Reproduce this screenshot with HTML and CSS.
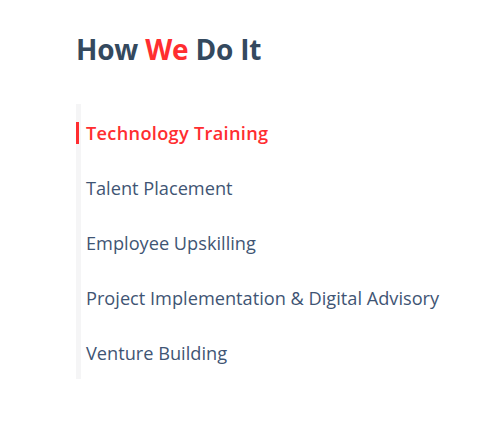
FILE: index.html
```html
<!DOCTYPE html>
<html>
<head>
<meta charset="utf-8">
<link rel="stylesheet" href="styles.css">
</head>
<body>
<section class="how">
  <h2 class="title">How <span class="accent">We</span> Do It</h2>
  <ul class="steps">
    <li class="step active">Technology Training</li>
    <li class="step">Talent Placement</li>
    <li class="step">Employee Upskilling</li>
    <li class="step">Project Implementation &amp; Digital Advisory</li>
    <li class="step">Venture Building</li>
  </ul>
</section>
</body>
</html>
```
FILE: styles.css
```css
html, body {
  margin: 0;
  padding: 0;
  background: #ffffff;
}
.how {
  padding: 30px 0 0 76px;
  font-family: "Open Sans", "Noto Sans", sans-serif;
}
.title {
  margin: 0;
  font-size: 28px;
  line-height: 38px;
  font-weight: 700;
  color: #34495e;
  letter-spacing: -0.2px;
}
.accent {
  color: #ff2d30;
}
.steps {
  list-style: none;
  margin: 36px 0 0 0;
  padding: 0;
  border-left: 5px solid #f5f5f6;
  width: fit-content;
}
.step {
  position: relative;
  box-sizing: border-box;
  height: 55px;
  display: flex;
  align-items: center;
  padding: 3px 0 0 5px;
  font-size: 18.2px;
  color: #3f5574;
}
.step.active {
  color: #ff2d30;
  font-weight: 600;
  letter-spacing: 0.3px;
}
.step.active::before {
  content: "";
  position: absolute;
  left: -5px;
  top: 18px;
  width: 3px;
  height: 22px;
  background: #ff2d30;
}
```
